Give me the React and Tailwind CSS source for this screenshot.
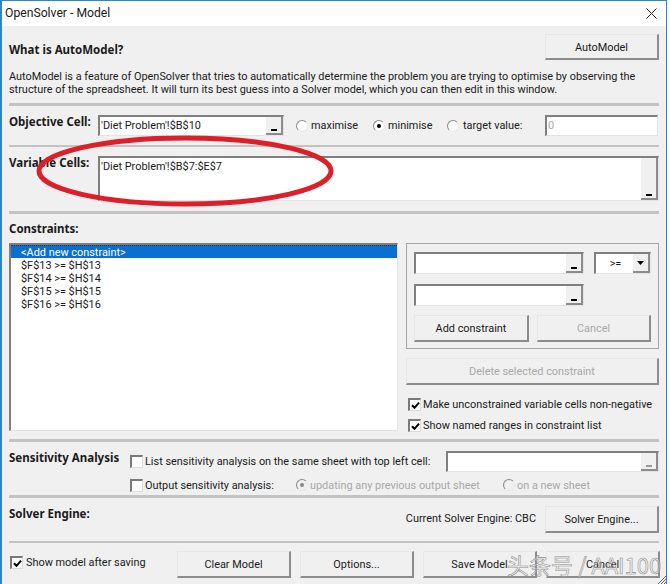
const BODY = "font-['Roboto','Liberation_Sans',sans-serif]";
const LABEL = "font-['Noto_Sans',sans-serif] font-bold text-[11.5px]";

function Divider({ thin }) {
  return <div className={`${thin ? "h-[2px]" : "h-[3px]"} bg-[#c3c3c3] shrink-0`} />;
}

function Btn({ children, className = "", disabled }) {
  return (
    <div
      className={`flex items-center justify-center bg-[#f0f0f0] border-t border-l border-t-[#e6e6e6] border-l-[#e6e6e6] border-r-2 border-b-2 border-r-[#8c8c8c] border-b-[#8c8c8c] pt-[1px] ${
        disabled ? "text-[#a8a8a8]" : "text-[#1a1a1a]"
      } ${className}`}
    >
      {children}
    </div>
  );
}

function RefBtn({ disabled }) {
  return (
    <div className="w-[17px] h-full shrink-0 bg-[#f0f0f0] border-r-2 border-b-2 border-r-[#8c8c8c] border-b-[#8c8c8c] flex items-end justify-center pb-[2px]">
      <div className={`w-[6px] h-[2px] ${disabled ? "bg-[#9a9a9a]" : "bg-black"}`} />
    </div>
  );
}

function Sunken({ children, className = "" }) {
  return (
    <div className={`flex bg-white border-t-2 border-l-2 border-t-[#7f7f7f] border-l-[#7f7f7f] border-b border-r border-b-[#e3e3e3] border-r-[#e3e3e3] ${className}`}>
      {children}
    </div>
  );
}

function Radio({ checked, disabled }) {
  return (
    <span className={`relative w-[12px] h-[12px] shrink-0 rounded-full border border-t-[#8a8a8a] border-l-[#8a8a8a] border-b-[#e8e8e8] border-r-[#e8e8e8] flex items-center justify-center ${disabled ? "bg-[#f0f0f0]" : "bg-white"}`}>
      {checked && <span className={`w-[4px] h-[4px] rounded-full ${disabled ? "bg-[#8a8a8a]" : "bg-black"}`} />}
    </span>
  );
}

function Check({ checked }) {
  return (
    <span className="w-[13px] h-[13px] shrink-0 bg-white border-t-2 border-l-2 border-t-[#7a7a7a] border-l-[#7a7a7a] border-b border-r border-b-[#dcdcdc] border-r-[#dcdcdc] flex items-center justify-center">
      {checked && (
        <svg width="9" height="9" viewBox="0 0 9 9">
          <path d="M1 4.2 L3.5 6.8 L8 1.6" fill="none" stroke="black" strokeWidth="2" />
        </svg>
      )}
    </span>
  );
}

const CONSTRAINTS = ["$F$13 >= $H$13", "$F$14 >= $H$14", "$F$15 >= $H$15", "$F$16 >= $H$16"];

export default function App() {
  return (
    <div className={`relative w-[670px] h-[584px] overflow-hidden bg-white text-[10.9px] leading-[13px] text-[#1a1a1a] ${BODY}`}>
      <div className="w-[667px] h-[584px] flex flex-col border-l-2 border-r border-t border-[#2f86c4] bg-[#f0f0f0]">
        {/* title bar */}
        <div className="h-[25px] shrink-0 bg-white flex items-center justify-between pl-[3px] pr-[5px]">
          <span className="text-[12.2px]">OpenSolver - Model</span>
          <svg width="11" height="11" viewBox="0 0 11 11" className="mr-[4px]">
            <path d="M0.5 0.5 L10.5 10.5 M10.5 0.5 L0.5 10.5" stroke="#222" strokeWidth="1" />
          </svg>
        </div>

        <div className="flex-1 flex flex-col pl-[7px] pr-[7px]">
          {/* automodel */}
          <div className="h-[77px] shrink-0 pt-[8px]">
            <div className="flex justify-between h-[26px]">
              <span className={`${LABEL} mt-[9px]`}>What is AutoModel?</span>
              <Btn className="w-[114px]">AutoModel</Btn>
            </div>
            <p className="mt-[10px] whitespace-nowrap">
              AutoModel is a feature of OpenSolver that tries to automatically determine the problem you are trying to optimise by observing the
              <br />
              structure of the spreadsheet. It will turn its best guess into a Solver model, which you can then edit in this window.
            </p>
          </div>
          <Divider />

          {/* objective */}
          <div className="h-[39px] shrink-0 pt-[9px] flex items-start">
            <span className={`w-[89px] ${LABEL}`}>Objective Cell:</span>
            <Sunken className="w-[186px] h-[21px]">
              <span className="flex-1 pl-[1px] pt-[2px]">'Diet Problem'!$B$10</span>
              <RefBtn />
            </Sunken>
            <div className="flex items-center h-[21px] ml-[12px]">
              <Radio />
              <span className="ml-[3px] w-[62px]">maximise</span>
              <Radio checked />
              <span className="ml-[3px] w-[59px]">minimise</span>
              <Radio />
              <span className="ml-[4px] w-[82px]">target value:</span>
            </div>
            <Sunken className="w-[113px] h-[21px]">
              <span className="pl-[1px] pt-[2px] text-[#a8a8a8]">0</span>
            </Sunken>
          </div>
          <Divider thin />

          {/* variable cells */}
          <div className="h-[64px] shrink-0 pt-[9px] flex items-start">
            <span className={`w-[89px] ${LABEL}`}>Variable Cells:</span>
            <Sunken className="flex-1 h-[45px]">
              <span className="flex-1 pl-[1px] pt-[2px]">'Diet Problem'!$B$7:$E$7</span>
              <RefBtn />
            </Sunken>
          </div>
          <Divider />

          {/* constraints */}
          <div className="h-[225px] shrink-0">
            <div className={`${LABEL} h-[29px] pt-[8px]`}>Constraints:</div>
            <div className="flex gap-[8px]">
              <Sunken className="w-[389px] h-[188px] flex-col">
                <div className="bg-[#0a6fd0] text-white h-[13px] pl-[10px] border-t border-dotted border-[#333] leading-[13px]">
                  &lt;Add new constraint&gt;
                </div>
                {CONSTRAINTS.map((c) => (
                  <div key={c} className="h-[13px] pl-[10px] leading-[15px]">{c}</div>
                ))}
              </Sunken>

              <div className="w-[253px]">
                <div className="h-[106px] border border-[#a6a6a6] pl-[7px] pr-[7px] pt-[8px]">
                  <div className="flex">
                    <Sunken className="w-[170px] h-[22px]">
                      <span className="flex-1" />
                      <RefBtn />
                    </Sunken>
                    <Sunken className="w-[57px] h-[22px] ml-[10px]">
                      <span className="flex-1 text-center pt-[3px] pl-[2px]">&gt;=</span>
                      <div className="w-[17px] h-full bg-[#f0f0f0] border-r-2 border-b-2 border-r-[#8c8c8c] border-b-[#8c8c8c] flex items-center justify-center">
                        <svg width="7" height="4" viewBox="0 0 7 4"><path d="M0 0H7L3.5 4Z" fill="black" /></svg>
                      </div>
                    </Sunken>
                  </div>
                  <Sunken className="w-[170px] h-[22px] mt-[10px]">
                    <span className="flex-1" />
                    <RefBtn />
                  </Sunken>
                  <div className="flex justify-between mt-[9px]">
                    <Btn className="w-[115px] h-[27px]">Add constraint</Btn>
                    <Btn disabled className="w-[114px] h-[27px]">Cancel</Btn>
                  </div>
                </div>
                <Btn disabled className="w-[253px] h-[27px] mt-[9px]">Delete selected constraint</Btn>
                <div className="flex items-center gap-[2px] mt-[13px] ml-[2px]">
                  <Check checked />
                  <span className="whitespace-nowrap">Make unconstrained variable cells non-negative</span>
                </div>
                <div className="flex items-center gap-[2px] mt-[8px] ml-[2px]">
                  <Check checked />
                  <span>Show named ranges in constraint list</span>
                </div>
              </div>
            </div>
          </div>
          <Divider />

          {/* sensitivity */}
          <div className="h-[53px] shrink-0 flex">
            <span className={`w-[121px] ${LABEL} pt-[9px]`}>Sensitivity Analysis</span>
            <div className="flex-1 pt-[9px]">
              <div className="flex items-center h-[21px]">
                <Check />
                <span className="ml-[2px] w-[301px] whitespace-nowrap">List sensitivity analysis on the same sheet with top left cell:</span>
                <Sunken className="flex-1 h-[21px]">
                  <span className="flex-1" />
                  <RefBtn disabled />
                </Sunken>
              </div>
              <div className="flex items-center mt-[6px] h-[14px]">
                <Check />
                <span className="ml-[2px] w-[151px] whitespace-nowrap">Output sensitivity analysis:</span>
                <Radio checked disabled />
                <span className="ml-[2px] w-[193px] whitespace-nowrap text-[#a8a8a8]">updating any previous output sheet</span>
                <Radio disabled />
                <span className="ml-[2px] whitespace-nowrap text-[#a8a8a8]">on a new sheet</span>
              </div>
            </div>
          </div>
          <Divider />

          {/* solver engine */}
          <div className="h-[43px] shrink-0 flex justify-between pt-[8px]">
            <span className={`${LABEL} pt-[1px]`}>Solver Engine:</span>
            <div className="flex gap-[9px]">
              <span className="pt-[6px]">Current Solver Engine: CBC</span>
              <Btn className="w-[114px] h-[27px]">Solver Engine...</Btn>
            </div>
          </div>
          <Divider thin />

          {/* footer */}
          <div className="flex-1 flex items-start pt-[8px]">
            <div className="flex items-center gap-[3px] w-[167px] ml-[1px] mt-[5px] shrink-0">
              <Check checked />
              <span>Show model after saving</span>
            </div>
            <div className="flex gap-[9px]">
              <Btn className="w-[114px] h-[27px]">Clear Model</Btn>
              <Btn className="w-[114px] h-[27px]">Options...</Btn>
              <Btn className="w-[114px] h-[27px]">Save Model</Btn>
              <Btn className="w-[114px] h-[27px]">Cancel</Btn>
            </div>
          </div>
        </div>
      </div>

      {/* red annotation */}
      <svg width="670" height="584" viewBox="0 0 670 584" className="absolute inset-0 pointer-events-none">
        <ellipse cx="185" cy="171" rx="146" ry="33" fill="none" stroke="#dc1f28" strokeWidth="5" />
      </svg>

      {/* watermark */}
      <div className="absolute left-[507px] top-[550px] text-[22px] leading-[28px] whitespace-nowrap font-['Noto_Sans_CJK_SC','Noto_Sans',sans-serif] text-white/40 [-webkit-text-stroke:0.6px_#8f8f8f] pointer-events-none">
        头条号 / AAI100
      </div>

      {/* resize grip */}
      <svg width="10" height="10" viewBox="0 0 10 10" className="absolute right-[3px] bottom-0">
        <path d="M10 1 L1 10 M10 4 L4 10 M10 7 L7 10" stroke="#666" strokeWidth="1" />
      </svg>
    </div>
  );
}
